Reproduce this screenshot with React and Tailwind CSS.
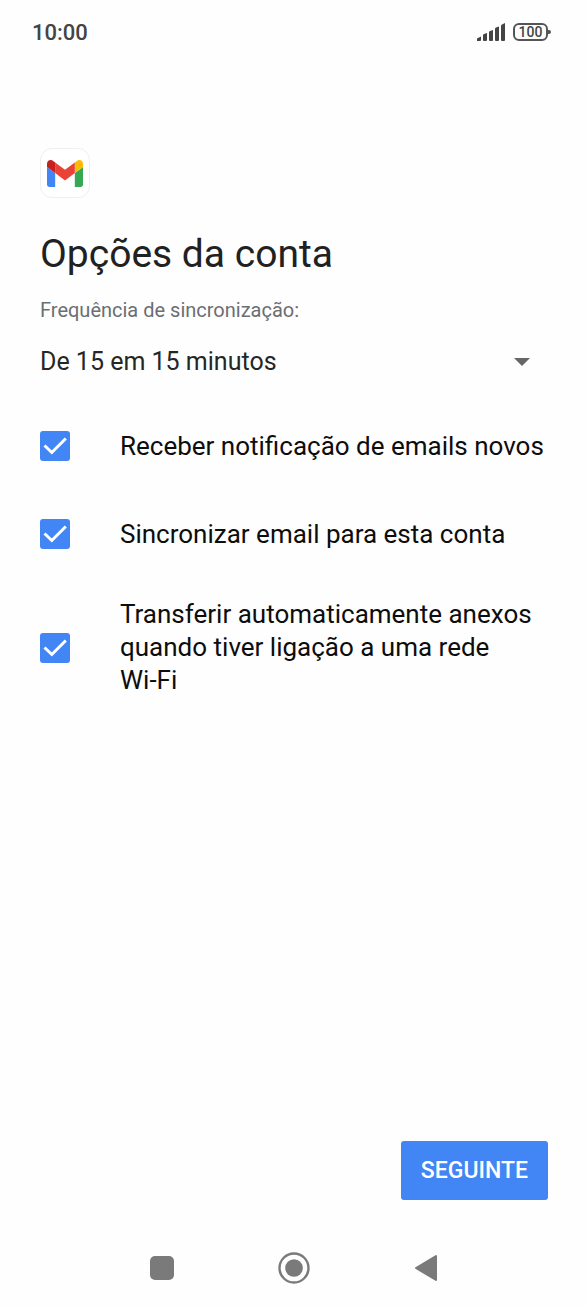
import { useState } from 'react'

const syncOptions = ['De 15 em 15 minutos', 'De 30 em 30 minutos', 'De hora a hora', 'Nunca']

const accountOptions = [
  { id: 'notify', label: 'Receber notificação de emails novos' },
  { id: 'sync', label: 'Sincronizar email para esta conta' },
  {
    id: 'attachments',
    label: (
      <>
        Transferir automaticamente anexos quando tiver ligação a uma rede{' '}
        <span className="whitespace-nowrap">Wi-Fi</span>
      </>
    ),
  },
]

function StatusBar() {
  return (
    <header className="flex h-16 items-center justify-between pl-8 pr-9 text-[#444444]">
      <time className="text-[22px] font-medium">10:00</time>
      <div className="flex items-center gap-2">
        <svg className="h-[19px] w-7" viewBox="0 0 28 19" fill="currentColor" aria-label="Sinal de rede">
          <path d="M0 18v-2.5L4 13.5V17q0 1-1 1zM6 18v-5.5q0-1 1-1.4l3-1.2V17q0 1-1 1H7q-1 0-1-1zM12 17V9.5q0-1 1-1.4l3-1.2V17q0 1-1 1h-2q-1 0-1-1zM18 17V6q0-1 1-1.4l3-1.2V17q0 1-1 1h-2q-1 0-1-1zM24 17V3q0-1 1-1.4L28 0v17q0 1-1 1h-2q-1 0-1-1z" />
        </svg>
        <div className="flex items-center">
          <span className="flex h-[18px] w-[35px] items-center justify-center rounded-md border-2 border-[#555555] text-[14px] font-medium leading-none">
            100
          </span>
          <span className="h-1 w-[3px] rounded-r-full bg-[#555555]" />
        </div>
      </div>
    </header>
  )
}

function GmailLogo() {
  return (
    <div className="flex size-[50px] items-center justify-center rounded-xl border border-[#efefef] bg-white">
      <svg className="h-[27px] w-9" viewBox="52 42 88 66" aria-label="Gmail">
        <path fill="#4285f4" d="M58 108h14V74L52 59v43c0 3.32 2.69 6 6 6" />
        <path fill="#34a853" d="M120 108h14c3.32 0 6-2.69 6-6V59l-20 15" />
        <path fill="#fbbc04" d="M120 48v26l20-15v-8c0-7.42-8.47-11.65-14.4-7.2" />
        <path fill="#ea4335" d="M72 74V48l24 18 24-18v26L96 92" />
        <path fill="#c5221f" d="M52 51v8l20 15V48l-5.6-4.2c-5.94-4.45-14.4-.22-14.4 7.2" />
      </svg>
    </div>
  )
}

function CheckRow({ id, label }) {
  const [checked, setChecked] = useState(true)

  return (
    <div className="flex min-h-[88px] items-center gap-[50px] py-5">
      <div className="relative size-[30px] shrink-0">
        <input
          id={id}
          type="checkbox"
          checked={checked}
          onChange={(e) => setChecked(e.target.checked)}
          className="block size-full appearance-none rounded-[3px] border-2 border-[#757575] checked:border-[#4285f4] checked:bg-[#4285f4]"
        />
        {checked && (
          <svg className="pointer-events-none absolute inset-0" viewBox="0 0 30 30" fill="none" stroke="#ffffff" strokeWidth="3">
            <path d="M4.5 14.5 11.8 21.5 25.8 7.5" />
          </svg>
        )}
      </div>
      <label htmlFor={id} className="text-[26px] leading-[33px] text-[#0d0d0d]">{label}</label>
    </div>
  )
}

function NavBar() {
  return (
    <nav className="flex h-[76px] items-center justify-center gap-[100px] text-[#7a7a7a]">
      <button type="button" aria-label="Recentes" className="flex size-8 items-center justify-center">
        <span className="size-6 rounded-[5px] bg-current" />
      </button>
      <button type="button" aria-label="Início">
        <svg className="size-8" viewBox="0 0 32 32">
          <circle cx="16" cy="16" r="14.5" fill="none" stroke="currentColor" strokeWidth="2.4" />
          <circle cx="16" cy="16" r="8.8" fill="currentColor" />
        </svg>
      </button>
      <button type="button" aria-label="Voltar">
        <svg className="size-8" viewBox="0 0 32 32" fill="currentColor" stroke="currentColor" strokeWidth="2" strokeLinejoin="round">
          <path d="M6 16 26 4v24z" />
        </svg>
      </button>
    </nav>
  )
}

export default function App() {
  return (
    <div className="flex min-h-screen flex-col bg-[#fefefe] font-['Roboto',sans-serif]">
      <StatusBar />

      <main className="flex grow flex-col pl-10 pr-[39px] pt-[84px]">
        <GmailLogo />
        <h1 className="mt-8 text-[39px] leading-12 text-[#212121]">Opções da conta</h1>

        {/* Sync frequency */}
        <label htmlFor="frequency" className="mt-5 text-[20px] leading-6 text-[#6b6e72]">
          Frequência de sincronização:
        </label>
        <div className="relative mt-4">
          <select id="frequency" className="h-12 w-full appearance-none bg-transparent text-[25px] text-[#262626]">
            {syncOptions.map((option) => (
              <option key={option}>{option}</option>
            ))}
          </select>
          <svg className="pointer-events-none absolute right-[18px] top-5 h-2 w-4" viewBox="0 0 16 8" fill="#666666">
            <path d="M0 0h16L8 8z" />
          </svg>
        </div>

        <div className="mt-4">
          {accountOptions.map((option) => (
            <CheckRow key={option.id} {...option} />
          ))}
        </div>

        <button type="button" className="mb-[30px] mt-auto self-end rounded-[3px] bg-[#4285f4] px-5 py-4 text-[23px] font-medium leading-[27px] text-white">
          SEGUINTE
        </button>
      </main>

      <NavBar />
    </div>
  )
}
